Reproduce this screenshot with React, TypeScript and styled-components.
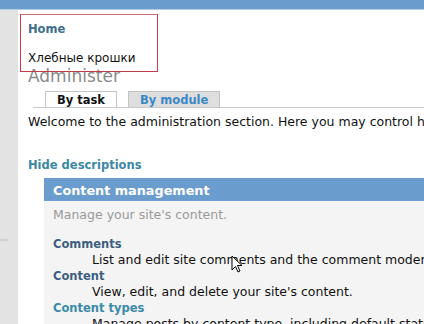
import React from "react";
import styled, { createGlobalStyle } from "styled-components";

const GlobalStyle = createGlobalStyle`
  html, body {
    margin: 0;
    padding: 0;
    background: #ffffff;
    overflow: hidden;
  }
  body {
    font-family: "DejaVu Sans", Verdana, sans-serif;
    font-size: 12.5px;
    color: #111;
  }
`;

const Page = styled.div`
  width: 424px;
  height: 324px;
  display: flex;
  flex-direction: column;
  overflow: hidden;
  position: relative;
`;

const TopBar = styled.div`
  height: 9px;
  background: #6a9ccd;
  border-bottom: 1px solid #b4cce4;
  flex-shrink: 0;
`;

const Body = styled.div`
  flex: 1;
  display: flex;
`;

const Sidebar = styled.div`
  width: 18px;
  flex-shrink: 0;
  background: #e3e3e3;
  display: flex;
  flex-direction: column;
  padding-top: 229px;
`;

const SideRule = styled.div`
  width: 8px;
  height: 2px;
  background: #cfcfcf;
`;

const Main = styled.div`
  flex: 1;
  min-width: 0;
  padding-left: 10px;
  white-space: nowrap;
`;

const Crumbs = styled.div`
  margin: 4px 0 0 -8px;
  width: 129px;
  height: 45px;
  padding: 7px 0 4px 7px;
  border: 1px solid #c23a48;
  border-top-color: #d06a74;
  display: flex;
  flex-direction: column;
  gap: 15px;
  position: relative;
  z-index: 1;
`;

const CrumbLink = styled.a`
  font-weight: bold;
  font-size: 11.5px;
  color: #3d6d8c;
  line-height: 14px;
  text-decoration: none;
`;

const CrumbText = styled.span`
  line-height: 14px;
  color: #111;
  font-size: 12px;
`;

const Title = styled.h1`
  margin: -6px 0 0;
  font-size: 17px;
  font-weight: normal;
  line-height: 20px;
  color: #8a8a8a;
`;

const Tabs = styled.div`
  margin: 5px 0 0 5px;
  padding-left: 12px;
  display: flex;
  gap: 11px;
  border-bottom: 1px solid #c8c8c8;
`;

const Tab = styled.div<{ $active?: boolean }>`
  height: 15px;
  padding: 0 11px;
  border: 1px solid #c4c4c4;
  border-bottom: none;
  background: ${(p) => (p.$active ? "#ffffff" : "#dedede")};
  color: ${(p) => (p.$active ? "#111" : "#3a88c8")};
  font-weight: bold;
  font-size: 11.5px;
  line-height: 16px;
`;

const Text = styled.p`
  margin: 6px 0 0;
  line-height: 16px;
`;

const Toggle = styled.a`
  display: block;
  margin-top: 27px;
  line-height: 16px;
  font-weight: bold;
  font-size: 11.5px;
  color: #3b87a6;
  text-decoration: none;
`;

const Panel = styled.div`
  margin: 5px 0 0 16px;
  background: #f4f4f4;
  height: 200px;
`;

const PanelHead = styled.div`
  height: 21px;
  padding: 2px 0 0 9px;
  background: #6a9ccd;
  color: #ffffff;
  font-weight: bold;
  font-size: 12.8px;
  line-height: 21px;
`;

const PanelBody = styled.div`
  padding: 6px 0 0 9px;
`;

const Hint = styled.div`
  line-height: 16px;
  color: #9a9a9a;
  margin-bottom: 13px;
`;

const ItemTitle = styled.a<{ $visited?: boolean }>`
  display: block;
  line-height: 16px;
  font-weight: bold;
  font-size: 11.5px;
  color: ${(p) => (p.$visited ? "#3b8aaa" : "#3d5e80")};
  text-decoration: none;
`;

const ItemDesc = styled.div`
  line-height: 16px;
  padding-left: 39px;
  color: #111;
`;

const Cursor = styled.svg`
  position: absolute;
  left: 231px;
  top: 255px;
`;

const items = [
  { title: "Comments", desc: "List and edit site comments and the comment moderation queue." },
  { title: "Content", desc: "View, edit, and delete your site's content." },
  { title: "Content types", desc: "Manage posts by content type, including default status", visited: true },
];

export default function App() {
  return (
    <Page>
      <GlobalStyle />
      <TopBar />
      <Body>
        <Sidebar>
          <SideRule />
        </Sidebar>
        <Main>
          <Crumbs>
            <CrumbLink href="#">Home</CrumbLink>
            <CrumbText>Хлебные крошки</CrumbText>
          </Crumbs>
          <Title>Administer</Title>
          <Tabs>
            <Tab $active>By task</Tab>
            <Tab>By module</Tab>
          </Tabs>
          <Text>Welcome to the administration section. Here you may control how your site functions.</Text>
          <Toggle href="#">Hide descriptions</Toggle>
          <Panel>
            <PanelHead>Content management</PanelHead>
            <PanelBody>
              <Hint>Manage your site's content.</Hint>
              {items.map((it) => (
                <div key={it.title}>
                  <ItemTitle href="#" $visited={it.visited}>{it.title}</ItemTitle>
                  <ItemDesc>{it.desc}</ItemDesc>
                </div>
              ))}
            </PanelBody>
          </Panel>
        </Main>
      </Body>
      <Cursor width="12" height="19" viewBox="0 0 12 19">
        <path d="M1 1 L1 15 L4.5 11.5 L7 17 L9 16 L6.5 10.5 L11 10.5 Z" fill="#fff" stroke="#000" strokeWidth="1" strokeLinejoin="round" />
      </Cursor>
    </Page>
  );
}
